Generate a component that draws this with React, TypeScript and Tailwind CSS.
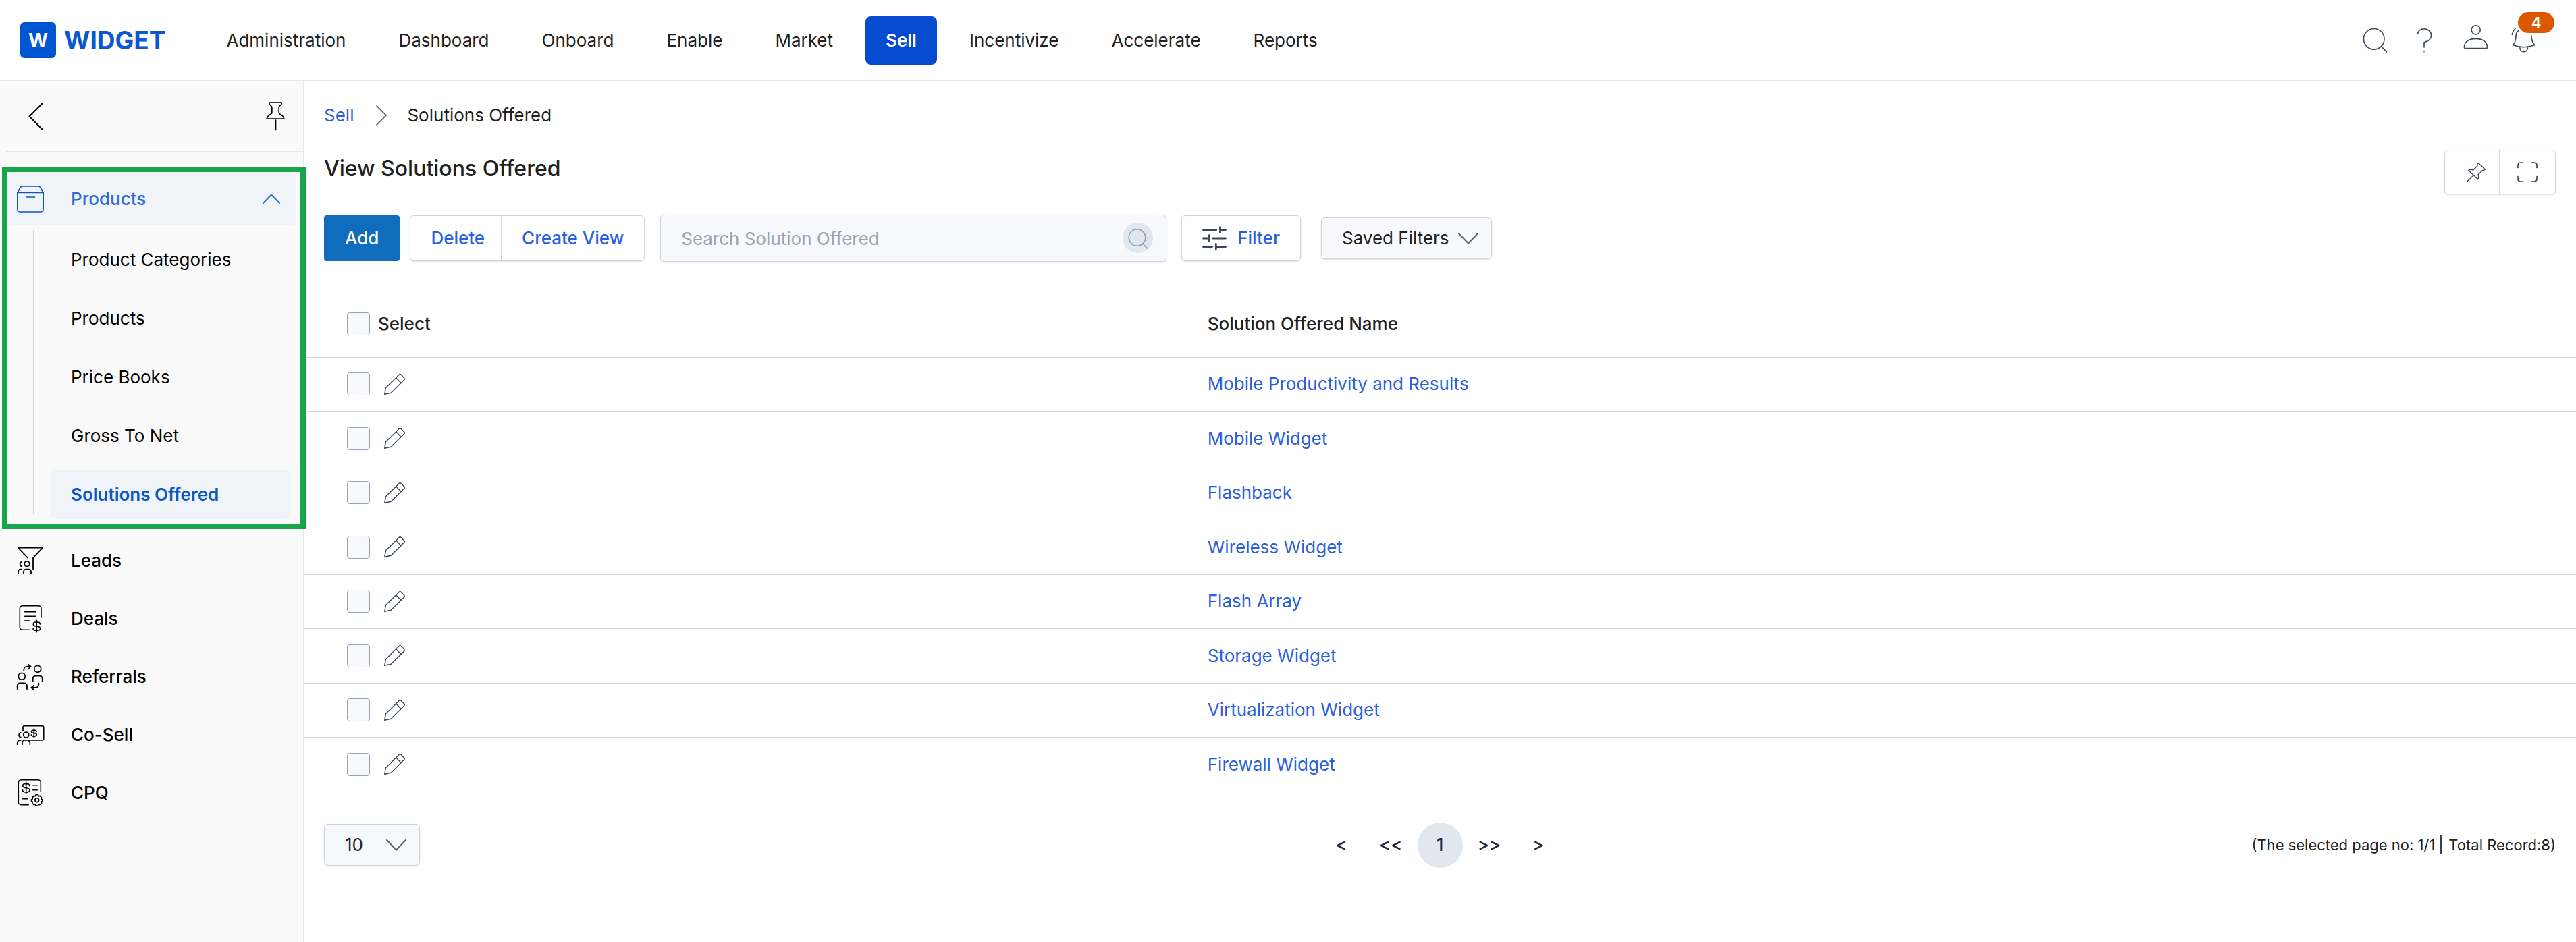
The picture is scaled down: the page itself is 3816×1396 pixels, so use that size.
import { useState, type ReactNode } from "react";

const navItems = ["Administration", "Dashboard", "Onboard", "Enable", "Market", "Sell", "Incentivize", "Accelerate", "Reports"];

const productLinks = ["Product Categories", "Products", "Price Books", "Gross To Net", "Solutions Offered"];

const solutions = [
  "Mobile Productivity and Results",
  "Mobile Widget",
  "Flashback",
  "Wireless Widget",
  "Flash Array",
  "Storage Widget",
  "Virtualization Widget",
  "Firewall Widget",
];

interface IconProps {
  box?: string;
  className?: string;
  stroke?: number;
  children: ReactNode;
}

function Icon({ box = "0 0 40 40", className = "w-10 h-10", stroke = 1.6, children }: IconProps) {
  return (
    <svg viewBox={box} className={`${className} shrink-0 overflow-visible`} fill="none" stroke="currentColor" strokeWidth={stroke} strokeLinecap="round" strokeLinejoin="round" aria-hidden="true">
      {children}
    </svg>
  );
}

function ChevronDown({ className }: { className: string }) {
  return (
    <Icon box="0 0 30 17" className={`w-[30px] h-[17px] text-[#666666] ${className}`} stroke={2.2}>
      <path d="M1 1l14 14.5L29 1" />
    </Icon>
  );
}

function PencilIcon() {
  return (
    <Icon box="0 0 31 31" className="w-[31px] h-[31px] text-[#3b4658]" stroke={1.4}>
      <path d="M.7 30.3l1.8-9.6L22.3 1.2c.8-.8 1.8-.8 2.6 0l4.9 5c.8.8.8 1.8 0 2.6L10.2 28.3z" />
      <path d="M18.3 6.5l6.8 7" />
    </Icon>
  );
}

const sections = [
  {
    name: "Leads",
    icon: (
      <Icon stroke={1.8}>
        <path d="M16 15.7L1.7.7h36.6L24 15.7v16.6" />
        <circle cx="15" cy="24.7" r="3.8" />
        <path d="M10 39v-2.8a3.5 3.5 0 0 1 3.5-3.5h4a3.5 3.5 0 0 1 3.5 3.5V39M7.3 21.8c-3.6.6-3.6 6 0 6.6M2 39v-2.8a3.5 3.5 0 0 1 3.5-3.5H7" />
      </Icon>
    ),
  },
  {
    name: "Deals",
    icon: (
      <Icon stroke={1.6}>
        <path d="M18.3 36.3h-10a4 4 0 0 1-4-4V4.7a4 4 0 0 1 4-4H32a4 4 0 0 1 4 4V18M11.7 9.7h16.6M11.7 16.3h16.6M11.7 23h7.6" />
        <path d="M29.3 22.3v17.4M34.5 28c0-2-1.8-3.2-5.2-3.2s-5.1 1.2-5.1 3.2 1.9 2.8 5.1 3.1 5.4 1.1 5.4 3.2-2 3.2-5.4 3.2-5.3-1.3-5.3-3.3" />
      </Icon>
    ),
  },
  {
    name: "Referrals",
    icon: (
      <Icon stroke={1.8}>
        <circle cx="7.3" cy="19.3" r="5" />
        <circle cx="30.7" cy="8.3" r="5" />
        <path d="M.7 38v-4.5a4 4 0 0 1 4-4H11a4 4 0 0 1 4 4V38M23.7 26.3v-3.8a4 4 0 0 1 4-4h6a4 4 0 0 1 4 4v3.8" />
        <path d="M10.3 11.3V9.7a5 5 0 0 1 5-5h5.4M16.7 1.7l4 3L17 8.3M32.3 29.7V31a5 5 0 0 1-5 5h-6M25.3 32.7l-4 3.3 4 3.3" />
      </Icon>
    ),
  },
  {
    name: "Co-Sell",
    icon: (
      <Icon stroke={1.7}>
        <path d="M9 14.3V9.2a2.5 2.5 0 0 1 2.5-2.5h25.7a2.5 2.5 0 0 1 2.5 2.5v16.3a2.5 2.5 0 0 1-2.5 2.5H21" />
        <path d="M25.3 11v13M29 15.2c0-1.5-1.4-2.2-3.7-2.2s-3.7.8-3.7 2.2 1.4 2 3.7 2.2 3.9.8 3.9 2.4-1.5 2.3-3.9 2.3-3.9-.8-3.9-2.3" />
        <circle cx="13.7" cy="20" r="4" />
        <path d="M8 34.3v-2.8a3.5 3.5 0 0 1 3.5-3.5h4.3a3.5 3.5 0 0 1 3.5 3.5v2.8M5.9 16.9c-3.8.6-3.8 6.2 0 6.8M.7 34.3v-2.8A3.5 3.5 0 0 1 4.2 28h1.5" />
      </Icon>
    ),
  },
  {
    name: "CPQ",
    icon: (
      <Icon stroke={1.6}>
        <path d="M17.3 37.7h-11a4 4 0 0 1-4-4v-29a4 4 0 0 1 4-4h25a4 4 0 0 1 4 4V18M23.7 8.7h6.6M23.7 15.7h6.6M8.7 28.7h7.6" />
        <path d="M13.7 4v17.3M18.7 9.6c0-2-1.8-3.2-5-3.2s-5 1.2-5 3.2 1.9 2.8 5 3.1 5.2 1.1 5.2 3.2-2 3.2-5.2 3.2-5.2-1.3-5.2-3.3" />
        <circle cx="29.7" cy="30.7" r="2.9" />
        <path d="M28 22.8h3.4l.7 2 2.1-.4 2.4 2.4-.7 2.1 1.9 1.1v2l-1.9 1.2.6 2.1-2.5 2.4-2-.5-.8 1.8H28l-.8-1.8-2 .5-2.4-2.4.5-2.1-1.9-1.2v-2l1.9-1.1-.6-2.1 2.5-2.4 2 .4z" />
      </Icon>
    ),
  },
];

function Header() {
  return (
    <header className="flex h-[120px] items-center border-b border-[#e5e5e5] bg-white pr-[58px] pl-[30px]">
      <a href="#home" className="mr-[60px] flex items-center gap-3 text-[#0b57d0]">
        <span className="flex h-[53px] w-[53px] items-center justify-center rounded-md bg-[#0056d2] text-[28px] font-bold text-white">W</span>
        <span className="text-[37px] leading-none font-bold">WIDGET</span>
      </a>
      <nav className="flex gap-[18px]">
        {navItems.map((item) => (
          <a
            key={item}
            href={`#${item.toLowerCase()}`}
            className={item === "Sell" ? "flex h-[72px] items-center rounded-lg bg-[#044bcf] px-[30px] font-semibold text-white" : "flex h-[72px] items-center px-[30px]"}
          >
            {item}
          </a>
        ))}
      </nav>
      <div className="ml-auto flex items-center gap-[38px] text-[#3b4658]">
        <button aria-label="Search">
          <Icon box="0 0 36 36" className="w-9 h-9">
            <circle cx="16.7" cy="15.8" r="15.3" />
            <path d="M27.4 26.6l8.3 8.3" />
          </Icon>
        </button>
        <button aria-label="Help">
          <Icon box="0 0 36 36" className="w-9 h-9">
            <path d="M7.3 8.3C8.5 3.5 12.3.7 17 .7c6 0 10.7 4.4 10.7 9.8 0 5-3.3 8.3-10.7 10.3V28M17 34.7v.1" />
          </Icon>
        </button>
        <button aria-label="Account">
          <Icon box="0 0 36 46" className="w-9 h-[46px]">
            <circle cx="19.7" cy="7.3" r="6.6" />
            <path d="M4 34.5c-1 0-1.6-.6-1.6-1.6 0-8 7-12.5 17.1-12.5s17.1 4.5 17.1 12.5c0 1-.6 1.6-1.6 1.6z" />
          </Icon>
        </button>
        <button aria-label="Notifications" className="relative">
          <Icon box="0 0 36 36" className="w-9 h-9">
            <path d="M8.7 3.7C6 5.7 5 8 5 11.5 5 17 3.8 21 .7 24.8c10 3.6 22 3.6 32 0-3.3-3.8-4.8-8.3-5-14.5M10.7 28c.4 4.3 2.9 6.8 6 6.800s5.6-2.5 6-6.8M4 .5C1.5 2.7.2 5.6-.7 9.3" />
          </Icon>
          <span className="absolute -top-6 left-2 flex h-[31px] w-[54px] items-center justify-center rounded-full bg-[#dc5800] text-[22px] font-semibold text-white">4</span>
        </button>
      </div>
    </header>
  );
}

function Sidebar() {
  const [open, setOpen] = useState(true);

  return (
    <aside className="w-[450px] shrink-0 border-r border-[#e2e8f0] bg-[#fafafa] text-black">
      <div className="ml-[9px] flex h-[105px] items-center justify-between border-b border-[#e2e5ee] pr-[27px] pl-[33px]">
        <button aria-label="Back">
          <Icon box="0 0 22 40" className="w-[22px] h-10" stroke={2}>
            <path d="M20.5 1.5l-19 19 19 19" />
          </Icon>
        </button>
        <button aria-label="Pin menu">
          <Icon box="0 0 28 42" className="w-7 h-[42px]" stroke={1.7}>
            <path d="M5 1h18c1 1.500 0 2.500-1.500 4-1.500 1.300-2.300 1.800-2.300 3v8c0 1.500 1 1.800 3 3 3 2 4.500 3.500 4.500 6H1.300c0-2.500 1.500-4 4.500-6 2-1.200 3-1.500 3-3V8c0-1.200-.8-1.700-2.300-3C5 3.500 4 2.500 5 1zM14.500 27v14.500" />
          </Icon>
        </button>
      </div>

      <div className="relative mt-[22px] -mr-1 ml-[3px] border-8 border-[#18a54b]">
        <button onClick={() => setOpen(!open)} className="flex h-[79px] w-[428px] items-center rounded-lg bg-[#f0f4f9] pr-6 pl-3.5 font-medium text-[#2f6bd8]">
          <Icon className="w-10 h-10 text-[#0b57c4]">
            <path d="M.8 10.5L5 3C5.8 1.5 6.7.9 8 .9h24c1.300 0 2.200.6 3 2.100l4.200 7.500V35a4 4 0 0 1-4 4H4.800a4 4 0 0 1-4-4z" />
            <path d="M.8 10.5h38.400M14 17h12.500" />
          </Icon>
          <span className="ml-10">Products</span>
          <Icon box="0 0 26 15" className="ml-auto w-[26px] h-[15px]" stroke={2}>
            <path d="M1 14L13 1.500 25 14" />
          </Icon>
        </button>
        {open && (
          <div className="my-[7px] flex">
            <div className="mb-2 ml-[38px] w-0.5 bg-[#cbd2e1]" />
            <ul className="mr-3.5 ml-6 flex flex-1 flex-col gap-[15px] pt-2">
              {productLinks.map((link) => (
                <li key={link}>
                  <a
                    href="#sell"
                    className={
                      link === "Solutions Offered"
                        ? "flex h-[72px] items-center rounded-lg bg-[#f0f4f9] pl-[30px] font-semibold text-[#0b57c4]"
                        : "flex h-[72px] items-center pl-[30px]"
                    }
                  >
                    {link}
                  </a>
                </li>
              ))}
            </ul>
          </div>
        )}
      </div>

      <ul className="mt-1 font-medium">
        {sections.map((s) => (
          <li key={s.name}>
            <a href="#sell" className="flex h-[86px] items-center gap-10 pl-[25px]">
              {s.icon}
              {s.name}
            </a>
          </li>
        ))}
      </ul>
    </aside>
  );
}

function Toolbar() {
  return (
    <div className="mt-[30px] flex items-center px-[30px] font-medium text-[#2b5fdb]">
      <button className="h-[68px] rounded-sm bg-[#106cbd] px-[31px] text-white">Add</button>
      <div className="ml-[15px] flex h-[68px] rounded-md border border-[#cbd5e0] shadow-sm">
        <button className="pr-6 pl-[30px]">Delete</button>
        <button className="border-l border-[#cbd5e0] px-[30px]">Create View</button>
      </div>
      <div className="relative ml-[23px]">
        <input
          type="text"
          aria-label="Search Solution Offered"
          placeholder="Search Solution Offered"
          className="h-[70px] w-[750px] rounded-md border border-[#cbd5e0] bg-[#f8f9fc] pr-20 pl-[30px] font-normal shadow-sm placeholder:text-[#9ca3af]"
        />
        <button aria-label="Run search" className="absolute top-3 right-5 flex h-[45px] w-[45px] items-center justify-center rounded-full bg-[#e0e7ef] text-[#8d97a6]">
          <Icon box="0 0 30 30" className="w-[30px] h-[30px]" stroke={1.5}>
            <circle cx="13.5" cy="14" r="12.3" />
            <path d="M22 23l6.500 7" />
          </Icon>
        </button>
      </div>
      <button className="ml-[22px] flex h-[68px] items-center gap-4 rounded-md border border-[#cbd5e0] px-[30px] shadow-sm">
        <Icon box="0 0 36 36" className="w-9 h-9 text-[#3b4658]" stroke={2.8}>
          <path d="M1.4 5.5h19.5M26.5 1.4v8.5M27 5.5h7.6M1.4 18h8M10.3 13.7v8.6M16 18h18.6M1.4 30.5h13.2M20.3 26.5V35M21 30.5h13.6" />
        </Icon>
        Filter
      </button>
      <div className="relative ml-[30px]">
        <select aria-label="Saved Filters" className="h-[62px] w-[253px] appearance-none rounded-md border border-[#cbd5e0] bg-[#f8f9fc] pl-[30px] font-normal text-[#212121] shadow-sm">
          <option>Saved Filters</option>
        </select>
        <ChevronDown className="pointer-events-none absolute top-[23px] right-5" />
      </div>
    </div>
  );
}

function Checkbox({ id, label }: { id: string; label?: string }) {
  return <input type="checkbox" id={id} aria-label={label} className="h-[34px] w-[34px] shrink-0 appearance-none rounded-sm border border-[#94a3b8] bg-[#f8f9fc] checked:bg-[#106cbd]" />;
}

function SolutionsTable() {
  return (
    <table className="mt-[44px] w-full table-fixed text-left">
      <thead>
        <tr className="h-[97px] border-b border-[#cbd5e0]">
          <th className="w-[39%] pl-16 font-medium">
            <div className="flex items-center gap-3">
              <Checkbox id="select-all" />
              <label htmlFor="select-all">Select</label>
            </div>
          </th>
          <th className="pl-[26px] font-medium">Solution Offered Name</th>
        </tr>
      </thead>
      <tbody>
        {solutions.map((name, i) => (
          <tr key={name} className="h-20 border-b border-[#cbd5e0] even:h-[81px]">
            <td className="pl-16">
              <div className="flex items-center gap-[21px]">
                <Checkbox id={`row-${i}`} label={name} />
                <button aria-label={`Edit ${name}`}>
                  <PencilIcon />
                </button>
              </div>
            </td>
            <td className="pl-[26px]">
              <a href="#solution" className="text-[#2b5fdb]">{name}</a>
            </td>
          </tr>
        ))}
      </tbody>
    </table>
  );
}

function Pager() {
  return (
    <div className="mt-[45px] grid grid-cols-[1fr_auto_1fr] items-center px-[30px]">
      <div className="relative w-[142px]">
        <select aria-label="Rows per page" className="h-[62px] w-full appearance-none rounded-md border border-[#cbd5e0] bg-[#f8f9fc] pl-[30px] shadow-sm">
          <option>10</option>
          <option>25</option>
          <option>50</option>
        </select>
        <ChevronDown className="pointer-events-none absolute top-[23px] right-5" />
      </div>
      <div className="flex gap-1.5 font-medium text-[#1e293b]">
        <button className="h-[67px] w-[67px]">&lt;</button>
        <button className="h-[67px] w-[67px]">&lt;&lt;</button>
        <button className="h-[67px] w-[67px] rounded-full bg-[#e0e7ef]">1</button>
        <button className="h-[67px] w-[67px]">&gt;&gt;</button>
        <button className="h-[67px] w-[67px]">&gt;</button>
      </div>
      <p className="flex justify-end text-[22px] leading-7">
        <span className="mr-2.5 border-r-2 border-[#334155] pr-2">(The selected page no: 1/1</span>
        <span>Total Record:8)</span>
      </p>
    </div>
  );
}

export default function App() {
  return (
    <div className="flex min-h-screen flex-col bg-white font-['Inter',sans-serif] text-[26px] leading-9 text-[#212121]">
      <Header />
      <div className="flex flex-1">
        <Sidebar />
        <main className="min-w-0 flex-1">
          <nav aria-label="Breadcrumb" className="flex h-[102px] items-center px-[30px]">
            <a href="#sell" className="text-[#2b5fdb]">Sell</a>
            <Icon box="0 0 16 30" className="mr-[30px] ml-[33px] w-4 h-[30px] text-[#3b4658]" stroke={1.5}>
              <path d="M1 1l14 14L1 29" />
            </Icon>
            <span>Solutions Offered</span>
          </nav>
          <div className="flex items-start justify-between px-[30px]">
            <h1 className="text-[32px] leading-[56px] font-medium">View Solutions Offered</h1>
            <div className="flex h-[66px] rounded-md border border-[#cbd5e0] text-[#3b4658] shadow-sm">
              <button aria-label="Pin page" className="flex w-20 items-center justify-center pl-3">
                <Icon box="0 0 28 29" className="w-7 h-[29px]" stroke={1.5}>
                  <path d="M17.3.5l10 9.5c-1 1.5-2 1.8-4 1.8L17 17.7c1 2.5 1 5-.3 7l-14-13.4c2-1.2 4.500-1.300 7-.3L15.800 5c-.3-2 .2-3.300 1.500-4.500zM9.300 19.700L.7 28" />
                </Icon>
              </button>
              <button aria-label="Full screen" className="flex w-[83px] items-center justify-center border-l border-[#cbd5e0]">
                <Icon box="0 0 30 30" className="w-[30px] h-[30px]" stroke={1.7}>
                  <path d="M1 8.500v-4A3.500 3.500 0 0 1 4.500 1h4M21.500 1h4A3.500 3.500 0 0 1 29 4.500v4M29 21.500v4a3.500 3.500 0 0 1-3.500 3.500h-4M8.500 29h-4A3.500 3.500 0 0 1 1 25.500v-4" />
                </Icon>
              </button>
            </div>
          </div>
          <Toolbar />
          <SolutionsTable />
          <Pager />
        </main>
      </div>
    </div>
  );
}
